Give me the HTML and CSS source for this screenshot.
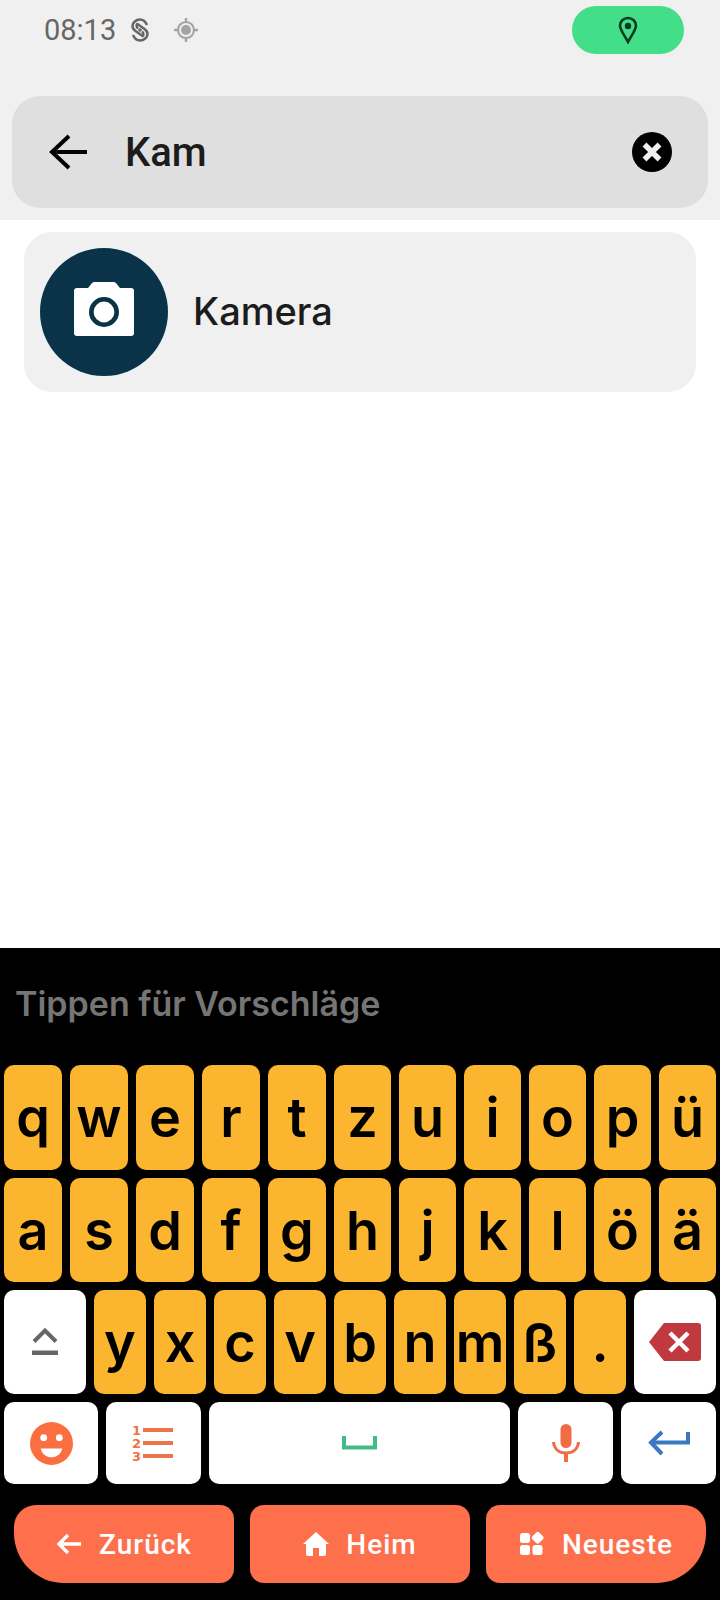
FILE: index.html
```html
<!DOCTYPE html>
<html lang="de">
<head>
<meta charset="utf-8">
<title>Suche</title>
<link rel="stylesheet" href="styles.css">
</head>
<body>
<div class="screen">
  <header class="top">
    <div class="status">
      <div class="status-left">
        <span class="time">08:13</span>
        <svg class="ic-sync" viewBox="0 0 18 24"><path d="M16 7C14.500 3.500 12 1.500 9 1.500 5 1.500 1.500 4.500 1.500 8 1.500 10 2.500 11.500 4.500 13L11.500 18C12.500 18.500 13 15 11 13.500" fill="none" stroke="#666" stroke-width="2.500"/><path d="M2 17C3.500 20.500 6 22.500 9 22.500 13 22.500 16.500 19.500 16.500 16 16.500 14 15.500 12.500 13.500 11L6.500 6C5.500 5.500 5 9 7 10.500" fill="none" stroke="#666" stroke-width="2.500"/><circle cx="9" cy="12" r="1.800" fill="#666"/></svg>
        <svg class="ic-gps" viewBox="0 0 24 24"><circle cx="12" cy="12" r="8" fill="none" stroke="#a4a4a4" stroke-width="2.200"/><circle cx="12" cy="12" r="5" fill="#a4a4a4"/><path d="M12 0v4M12 20v4M0 12h4M20 12h4" stroke="#a4a4a4" stroke-width="2.400"/></svg>
      </div>
      <div class="pill">
        <svg class="ic-pin" viewBox="0 0 20 28"><path d="M10 2C5.500 2 2 5.500 2 9.500 2 14 7 20 10 26 13 20 18 14 18 9.500 18 5.500 14.500 2 10 2Z" fill="none" stroke="#0b3a24" stroke-width="2.600"/><circle cx="10" cy="10" r="3.200" fill="#0b3a24"/></svg>
      </div>
    </div>
    <div class="search">
      <svg class="ic-back" viewBox="0 0 38 36"><path d="M20 2 L3 18 L20 34 M3 18 H38" fill="none" stroke="#000" stroke-width="4"/></svg>
      <span class="query">Kam</span>
      <span class="clear"><svg viewBox="0 0 40 40"><path d="M12.500 12.500 L27.500 27.500 M27.500 12.500 L12.500 27.500" stroke="#f0f0f0" stroke-width="5.500"/></svg></span>
    </div>
  </header>

  <main class="results">
    <div class="app-row">
      <span class="app-icon">
        <svg viewBox="0 0 60 54"><path d="M3 6H14L18 1Q19 0 20.500 0H39.500Q41 0 42 1L46 6H57A3 3 0 0 1 60 9V51A3 3 0 0 1 57 54H3A3 3 0 0 1 0 51V9A3 3 0 0 1 3 6Z" fill="#fff"/><circle cx="30" cy="30" r="12.700" fill="none" stroke="#0a3249" stroke-width="4.600"/></svg>
      </span>
      <span class="app-name">Kamera</span>
    </div>
  </main>

  <section class="keyboard">
    <div class="suggest">Tippen für Vorschläge</div>
    <div class="row row-a row-tall">
      <button class="key">q</button><button class="key">w</button><button class="key">e</button><button class="key">r</button><button class="key">t</button><button class="key">z</button><button class="key">u</button><button class="key">i</button><button class="key">o</button><button class="key">p</button><button class="key">ü</button>
    </div>
    <div class="row row-a">
      <button class="key">a</button><button class="key">s</button><button class="key">d</button><button class="key">f</button><button class="key">g</button><button class="key">h</button><button class="key">j</button><button class="key">k</button><button class="key">l</button><button class="key">ö</button><button class="key">ä</button>
    </div>
    <div class="row row-b">
      <button class="key light"><svg class="ic-shift" viewBox="0 0 26 32"><path d="M2 15.500 L13 4.500 L24 15.500" fill="none" stroke="#666" stroke-width="4"/><path d="M0 24.500H26V29H0Z" fill="#666"/></svg></button>
      <button class="key">y</button><button class="key">x</button><button class="key">c</button><button class="key">v</button><button class="key">b</button><button class="key">n</button><button class="key">m</button><button class="key">ß</button><button class="key">.</button>
      <button class="key light"><svg class="ic-del" viewBox="0 0 52 38"><path d="M15 0H49A3 3 0 0 1 52 3V35A3 3 0 0 1 49 38H15L0 19Z" fill="#c0393f"/><path d="M21 10 L39 28 M39 10 L21 28" stroke="#fff" stroke-width="4.500"/></svg></button>
    </div>
    <div class="row row-c">
      <button class="key light"><svg class="ic-emoji" viewBox="0 0 44 44"><circle cx="22" cy="22" r="22" fill="#fb6e3f"/><circle cx="14" cy="16" r="3.500" fill="#fff"/><circle cx="30" cy="16" r="3.500" fill="#fff"/><path d="M11 27H33C32 33 27 36 22 36 17 36 12 33 11 27Z" fill="#fff"/></svg></button>
      <button class="key light">
        <span class="list-icon">
          <span class="num">1</span><span class="bar"></span>
          <span class="num">2</span><span class="bar"></span>
          <span class="num">3</span><span class="bar"></span>
        </span>
      </button>
      <button class="key light"><svg class="ic-space" viewBox="0 0 35 14"><path d="M2 0V11.500H33V0" fill="none" stroke="#43bb84" stroke-width="4"/></svg></button>
      <button class="key light"><svg class="ic-mic" viewBox="0 0 28 38"><rect x="8.500" y="0" width="11" height="24" rx="5.500" fill="#f06c45"/><path d="M1.500 18C2 25 7 29 14 29S26 25 26.500 18" fill="none" stroke="#f06c45" stroke-width="3"/><path d="M12 28H16V38H12Z" fill="#f06c45"/></svg></button>
      <button class="key light"><svg class="ic-enter" viewBox="0 0 42 26"><path d="M14 2 L3 12.500 L14 24" fill="none" stroke="#3b78c2" stroke-width="4"/><path d="M3 12.500H40V2" fill="none" stroke="#3b78c2" stroke-width="4"/></svg></button>
    </div>
    <nav class="nav">
      <button class="nav-btn first"><svg class="ic-nav" viewBox="0 0 26 24"><path d="M12 3 L3 12 L12 21 M3 12 H25" fill="none" stroke="#fff" stroke-width="3.400"/></svg><span>Zurück</span></button>
      <button class="nav-btn"><svg class="ic-nav" viewBox="0 0 26 24"><path d="M13 0 L26 12 H23 V22 A2 2 0 0 1 21 24 H16 V16 H10 V24 H5 A2 2 0 0 1 3 22 V12 H0Z" fill="#fff"/></svg><span>Heim</span></button>
      <button class="nav-btn last"><svg class="ic-nav" viewBox="0 0 24 24"><rect x="0" y="1" width="10" height="10" rx="2.500" fill="#fff"/><rect x="0" y="13" width="10" height="10" rx="2.500" fill="#fff"/><rect x="12.500" y="13" width="10" height="10" rx="2.500" fill="#fff"/><rect x="13" y="1" width="9.500" height="9.500" rx="2" transform="rotate(45 17.700 5.700)" fill="#fff"/></svg><span>Neueste</span></button>
    </nav>
  </section>
</div>
</body>
</html>
```

FILE: styles.css
```css
* { box-sizing: border-box; }
html, body { margin: 0; padding: 0; background: #fff; }
.screen { width: 720px; height: 1600px; display: flex; flex-direction: column; overflow: hidden; font-family: Roboto, sans-serif; }

.top { height: 220px; background: #f0f0f0; padding: 6px 12px 0; flex: none; }
.status { height: 48px; display: flex; align-items: center; justify-content: space-between; padding: 0 24px 0 32px; margin-bottom: 42px; }
.status-left { display: flex; align-items: center; }
.time { font-size: 29px; font-weight: 400; color: #666; line-height: 48px; width: 87px; }
.ic-sync { width: 18px; height: 24px; margin-right: 25px; }
.ic-gps { width: 24px; height: 24px; }
.pill { width: 112px; height: 48px; border-radius: 24px; background: #42df88; display: flex; align-items: center; justify-content: center; }
.ic-pin { width: 20px; height: 28px; }

.search { height: 112px; border-radius: 28px; background: #dfdfdf; display: flex; align-items: center; padding: 0 36px 0 37px; }
.ic-back { width: 38px; height: 36px; flex: none; }
.query { font-size: 40px; font-weight: 500; color: #1c1c1c; margin-left: 38px; flex: 1; }
.clear { width: 40px; height: 40px; border-radius: 50%; background: #000; display: block; }
.clear svg { display: block; width: 40px; height: 40px; }

.results { flex: 1; background: #fff; padding: 12px 24px 0; }
.app-row { height: 160px; border-radius: 28px; background: #f0f0f0; display: flex; align-items: center; padding-left: 16px; }
.app-icon { width: 128px; height: 128px; border-radius: 50%; background: #0a3249; display: flex; align-items: center; justify-content: center; flex: none; margin-right: 25px; }
.app-icon svg { width: 60px; height: 54px; margin-bottom: 6px; }
.app-name { font-family: Inter, sans-serif; font-size: 38px; font-weight: 500; color: #1c1c1c; margin-top: -3px; }

.keyboard { height: 652px; flex: none; background: #000; padding: 0 4px; }
.suggest { height: 117px; padding: 35px 11px 0; font-family: Inter, sans-serif; font-size: 34px; font-weight: 600; line-height: 42px; color: #757575; }
.row { display: grid; gap: 8px; margin-bottom: 8px; height: 104px; }
.row-tall { height: 105px; }
.row-a { grid-template-columns: repeat(5, 58px) repeat(6, 57px); }
.row-b { grid-template-columns: 82px repeat(9, 52px) 82px; }
.row-c { grid-template-columns: 94px 95px 301px 95px 95px; height: 82px; margin-bottom: 21px; }
.key { border: 0; padding: 0; margin: 0; border-radius: 10px; background: #fbb52f; color: #000; font-family: Inter, sans-serif; font-size: 54px; font-weight: 600; display: flex; align-items: center; justify-content: center; }
.key.light { background: #fff; }
.ic-shift { width: 26px; height: 32px; }
.ic-del { width: 52px; height: 38px; }
.ic-emoji { width: 43px; height: 43px; }
.list-icon { display: grid; grid-template-columns: 8px 30px; column-gap: 3px; grid-auto-rows: 13px; align-items: center; margin-right: 2px; }
.num { font-family: "DejaVu Sans", sans-serif; font-size: 13px; font-weight: 700; line-height: 13px; color: #ee7447; text-align: left; }
.bar { height: 4.500px; background: #ee7447; }
.ic-space { width: 35px; height: 14px; }
.ic-mic { width: 28px; height: 38px; }
.ic-enter { width: 42px; height: 26px; }

.nav { display: grid; grid-template-columns: repeat(3, 220px); gap: 16px; padding: 0 10px; }
.nav-btn { height: 78px; border: 0; padding: 0; background: #fe6f4c; color: #fff; border-radius: 14px; font-family: Roboto, sans-serif; font-size: 28px; font-weight: 500; letter-spacing: 1px; display: flex; align-items: center; justify-content: center; gap: 17px; }
.nav-btn.first { border-radius: 22px 14px 14px 50px; }
.nav-btn.last { border-radius: 14px 22px 50px 14px; }
.ic-nav { width: 26px; height: 24px; }
```
